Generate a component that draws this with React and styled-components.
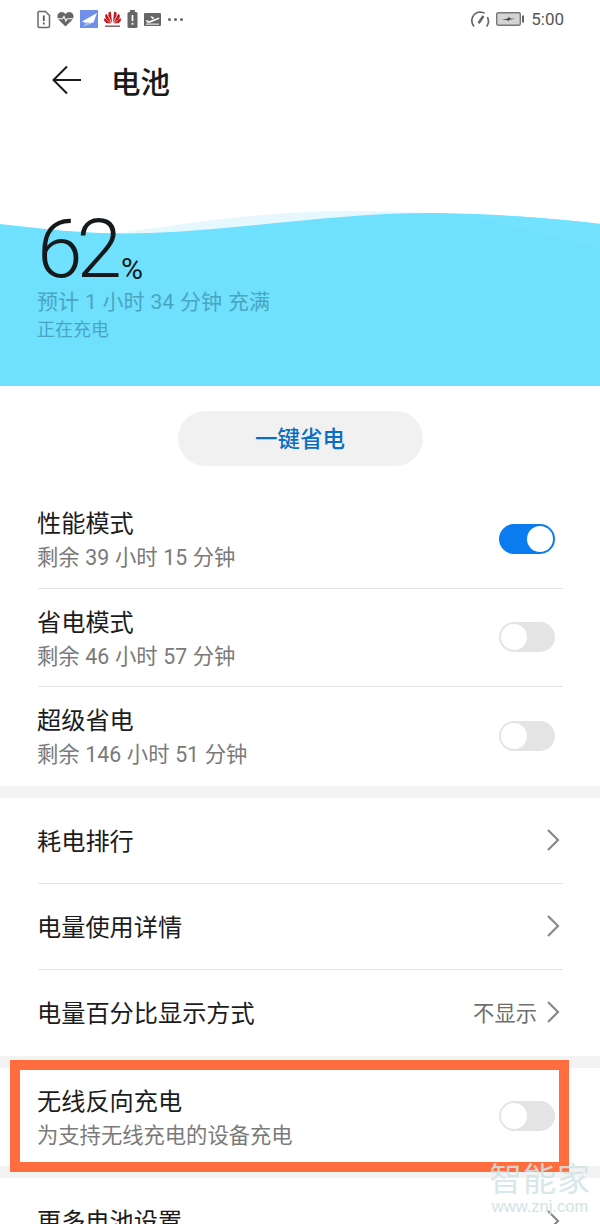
import React from 'react';
import styled, { createGlobalStyle } from 'styled-components';

const GlobalStyle = createGlobalStyle`
    html, body {
        margin: 0;
        padding: 0;
        background: #fff;
    }
    * {
        box-sizing: border-box;
    }
`;

const font = `Roboto, "Noto Sans CJK SC", sans-serif`;

const modes = [
    { title: '性能模式', sub: '剩余 39 小时 15 分钟', on: true },
    { title: '省电模式', sub: '剩余 46 小时 57 分钟', on: false },
    { title: '超级省电', sub: '剩余 146 小时 51 分钟', on: false },
];

const links = [
    { title: '耗电排行' },
    { title: '电量使用详情' },
    { title: '电量百分比显示方式', value: '不显示' },
];

const Chevron = () => (
    <svg width="14" height="24" viewBox="0 0 14 24" fill="none" stroke="#8a8a8a" strokeWidth="2.2">
        <path d="M2 2 L12 12 L2 22" />
    </svg>
);

const StatusIcons = () => (
    <IconRow>
        <svg width="14" height="19" viewBox="0 0 14 19" fill="none">
            <path d="M2 1.5 H8.5 L12.5 5.5 V16 Q12.5 17.5 11 17.5 H2.5 Q1 17.5 1 16 V3 Q1 1.5 2 1.5 Z" stroke="#6a6a6a" strokeWidth="1.5" />
            <path d="M6.8 5.5 V11 M6.8 12.6 V14.4" stroke="#555" strokeWidth="1.8" />
        </svg>
        <svg width="17" height="16" viewBox="0 0 17 16">
            <path d="M8.5 15.5 L1.4 8.4 C-0.6 5.8 0.6 1 4.4 1 C6.2 1 7.6 1.9 8.5 3.2 C9.4 1.9 10.8 1 12.6 1 C16.4 1 17.6 5.8 15.6 8.4 Z" fill="#666" />
            <path d="M0.5 7.8 H5.6 L7 5.4 L8.8 10 L10.2 7.8 H16.5" fill="none" stroke="#fff" strokeWidth="1.1" />
        </svg>
        <svg width="18" height="18" viewBox="0 0 18 18">
            <rect width="18" height="18" fill="#6f8fe8" />
            <path d="M2 11.5 L17 3 L13.5 12.5 L7.5 13.5 Z" fill="#fff" />
            <path d="M3 16.5 L12 13.8 L7 12 Z" fill="#a9bdf2" />
        </svg>
        <svg width="17" height="17" viewBox="0 0 17 17" fill="#c4161c">
            <path d="M8.1 12 L6.8 0.5 L4.6 1.4 L4.4 4.8 Z" />
            <path d="M8.9 12 L10.2 0.5 L12.4 1.4 L12.6 4.8 Z" />
            <path d="M7.5 12.2 L2.6 2.8 L1 4.8 L2 8 Z" />
            <path d="M9.5 12.2 L14.4 2.8 L16 4.8 L15 8 Z" />
            <path d="M7 12.4 L0.4 7 L0 9.6 L2.2 12 Z" />
            <path d="M10 12.4 L16.6 7 L17 9.6 L14.8 12 Z" />
            <rect x="1" y="14.4" width="15" height="1.6" fill="#8a6a6c" />
        </svg>
        <svg width="11" height="18" viewBox="0 0 11 18">
            <rect x="3" y="0" width="5" height="2" fill="#666" />
            <rect x="0.5" y="2" width="10" height="16" rx="1.5" fill="#666" />
            <path d="M5.5 5 V11 M5.5 12.8 V14.8" stroke="#fff" strokeWidth="1.7" />
        </svg>
        <svg width="17" height="13" viewBox="0 0 17 13">
            <rect width="17" height="13" rx="1" fill="#666" />
            <path d="M1.5 7.6 L3.5 7.2 L5 8.2 L14.8 4.6 Q15.8 5 15 6 L6 9.8 L3.4 9.8 Z M6.4 3.6 L8 3.2 L10.4 5.2 L8.4 6 Z" fill="#fff" />
            <rect x="2" y="10.6" width="13" height="1" fill="#fff" />
        </svg>
        <Dots>
            <i />
            <i />
            <i />
        </Dots>
    </IconRow>
);

const App = () => (
    <Page>
        <GlobalStyle />
        <StatusBar>
            <StatusIcons />
            <StatusRight>
                <svg width="20" height="19" viewBox="0 0 20 19" fill="none" stroke="#666" strokeWidth="1.7">
                    <path d="M4 16.5 C-0.5 11 2.5 2.5 10 2 C12 2 13.5 2.5 14.6 3.4" />
                    <path d="M17.4 7 C18.8 10 18.6 14 16.6 16.5" />
                    <path d="M8.6 13.2 L13.4 6" strokeWidth="2.6" />
                </svg>
                <svg width="28" height="14" viewBox="0 0 28 14">
                    <rect x="0.7" y="0.7" width="23.6" height="12.6" rx="1.5" fill="#d4d4d4" stroke="#777" strokeWidth="1.4" />
                    <path d="M6 7.4 L12 6.6 L13 4.5 L14 6.4 L19 6.8 L13 8 L12 9.8 L11.4 8 Z" fill="#444" />
                    <rect x="26" y="3.5" width="2" height="7" fill="#666" />
                </svg>
                <Clock>5:00</Clock>
            </StatusRight>
        </StatusBar>

        <Header>
            <svg width="30" height="30" viewBox="0 0 30 30" fill="none" stroke="#1a1a1a" strokeWidth="2">
                <path d="M29 15 H2 M15 1.5 L1.5 15 L15 28.5" />
            </svg>
            <PageTitle>电池</PageTitle>
        </Header>

        <Hero>
            <WaveArt viewBox="0 0 600 178" preserveAspectRatio="none">
                <path d="M0 40 C120 30 220 2 360 3 C440 4 520 10 600 18 V178 H0 Z" fill="#e6f8fe" />
                <path d="M0 16 C50 22 100 27 150 25 C250 21 340 4 440 5 C500 6 560 11 600 16 V178 H0 Z" fill="#6fe0fe" />
                <path d="M460 6 C520 8 570 12 600 16 V40 C560 30 510 18 460 6 Z" fill="#72e2ff" />
            </WaveArt>
            <Level>
                <LevelValue>62</LevelValue>
                <LevelUnit>%</LevelUnit>
            </Level>
            <Estimate>预计 1 小时 34 分钟 充满</Estimate>
            <ChargeState>正在充电</ChargeState>
        </Hero>

        <SaverWrap>
            <SaverButton>一键省电</SaverButton>
        </SaverWrap>

        <Group>
            {modes.map((mode, index) => (
                <ModeRow key={mode.title} divided={index < modes.length - 1}>
                    <RowText>
                        <RowTitle>{mode.title}</RowTitle>
                        <RowSub>{mode.sub}</RowSub>
                    </RowText>
                    <Toggle on={mode.on} />
                </ModeRow>
            ))}
        </Group>

        <Band />

        <Group>
            {links.map((link, index) => (
                <LinkRow key={link.title} divided={index < links.length - 1}>
                    <RowTitle>{link.title}</RowTitle>
                    <RowEnd>
                        {link.value && <RowValue>{link.value}</RowValue>}
                        <Chevron />
                    </RowEnd>
                </LinkRow>
            ))}
        </Group>

        <Band />

        <Group>
            <ModeRow>
                <RowText>
                    <RowTitle>无线反向充电</RowTitle>
                    <RowSub>为支持无线充电的设备充电</RowSub>
                </RowText>
                <Toggle />
                <Highlight />
            </ModeRow>
        </Group>

        <Band />

        <Group>
            <LinkRow>
                <RowTitle>更多电池设置</RowTitle>
                <RowEnd>
                    <Chevron />
                </RowEnd>
            </LinkRow>
        </Group>

        <Watermark>
            <WatermarkName>智能家</WatermarkName>
            <WatermarkUrl>www.znj.com</WatermarkUrl>
        </Watermark>
    </Page>
);

export default App;

const Page = styled.div`
    position: relative;
    width: 600px;
    height: 1224px;
    overflow: hidden;
    background: #fff;
    font-family: ${font};
`;

const StatusBar = styled.div`
    height: 38px;
    padding: 0 36px 0 37px;
    display: flex;
    align-items: center;
    justify-content: space-between;
`;

const IconRow = styled.div`
    display: flex;
    align-items: center;
    gap: 6px;
`;

const Dots = styled.div`
    display: flex;
    gap: 3px;
    margin-left: 1px;

    i {
        width: 3px;
        height: 3px;
        border-radius: 50%;
        background: #666;
    }
`;

const StatusRight = styled.div`
    display: flex;
    align-items: center;
    gap: 6px;
`;

const Clock = styled.span`
    font-size: 17px;
    color: #555;
    margin-left: 1px;
`;

const Header = styled.div`
    height: 84px;
    padding-left: 52px;
    display: flex;
    align-items: center;
    gap: 29px;
`;

const PageTitle = styled.h1`
    margin: 0;
    font-size: 29.5px;
    font-weight: 500;
    color: #1a1a1a;
`;

const Hero = styled.div`
    position: relative;
    height: 178px;
    margin-top: 86px;
    padding: 0 37px;
`;

const WaveArt = styled.svg`
    position: absolute;
    left: 0;
    top: 0;
    width: 100%;
    height: 100%;
`;

const Level = styled.div`
    position: relative;
    display: flex;
    align-items: flex-end;
    height: 79px;
`;

const LevelValue = styled.span`
    font-family: Roboto, sans-serif;
    font-weight: 300;
    font-size: 82px;
    line-height: 76px;
    letter-spacing: -6px;
    color: #14191c;
`;

const LevelUnit = styled.span`
    font-family: Roboto, sans-serif;
    font-size: 30px;
    line-height: 30px;
    color: #14191c;
    margin-left: 5px;
    margin-bottom: 3px;
`;

const Estimate = styled.div`
    position: relative;
    font-size: 21px;
    line-height: 30px;
    word-spacing: 0.7px;
    color: #4ba5c1;
`;

const ChargeState = styled.div`
    position: relative;
    margin-top: 1px;
    font-size: 18px;
    line-height: 24px;
    color: #4ba5c1;
`;

const SaverWrap = styled.div`
    padding: 25px 0 24px;
    display: flex;
    justify-content: center;
`;

const SaverButton = styled.button`
    width: 245px;
    height: 55px;
    padding: 0 0 3px;
    border: none;
    border-radius: 28px;
    background: #f1f1f1;
    color: #0a6fc4;
    font-family: ${font};
    font-size: 22.5px;
    font-weight: 500;
`;

const Group = styled.div`
    padding: 0 37px 0 38px;
`;

const ModeRow = styled.div`
    position: relative;
    height: 98.5px;
    display: flex;
    align-items: center;
    justify-content: space-between;
    border-bottom: 1px solid ${props => (props.divided ? '#e2e2e2' : 'transparent')};
    padding-right: 8px;
`;

const LinkRow = styled.div`
    height: 86px;
    display: flex;
    align-items: center;
    justify-content: space-between;
    border-bottom: 1px solid ${props => (props.divided ? '#e2e2e2' : 'transparent')};
    padding-right: 3px;
`;

const RowText = styled.div`
    display: flex;
    flex-direction: column;
    gap: 4px;
`;

const RowTitle = styled.div`
    margin: 3px 0 0 -1px;
    font-size: 24.2px;
    line-height: 32px;
    color: #1c1c1c;
`;

const RowSub = styled.div`
    margin-left: -1px;
    font-size: 21.3px;
    line-height: 28px;
    word-spacing: 0.4px;
    color: #7a7a7a;
`;

const RowEnd = styled.div`
    display: flex;
    align-items: center;
    gap: 9px;
`;

const RowValue = styled.span`
    font-size: 21.3px;
    margin-top: -2px;
    color: #6f6f6f;
`;

const Toggle = styled.div`
    position: relative;
    width: 56px;
    height: 30px;
    border-radius: 15px;
    background: ${props => (props.on ? '#0a7cf0' : '#e4e4e4')};

    &::after {
        content: '';
        position: absolute;
        top: 2px;
        left: ${props => (props.on ? '28px' : '2px')};
        width: 26px;
        height: 26px;
        border-radius: 50%;
        background: #fff;
    }
`;

const Band = styled.div`
    height: 12px;
    background: #f3f3f3;
`;

const Highlight = styled.div`
    position: absolute;
    left: -28px;
    right: -6px;
    top: -7.5px;
    bottom: -6.5px;
    border: 10px solid #ff6c3e;
`;

const Watermark = styled.div`
    position: absolute;
    left: 489px;
    top: 1161px;
    width: 102px;
    display: flex;
    flex-direction: column;
    align-items: center;
    color: #cfe4e6;
`;

const WatermarkName = styled.div`
    font-size: 33px;
    line-height: 38px;
    letter-spacing: 1px;
    white-space: nowrap;
    opacity: 0.85;
`;

const WatermarkUrl = styled.div`
    font-family: "Liberation Sans", sans-serif;
    font-size: 16.5px;
    line-height: 14px;
    white-space: nowrap;
`;
